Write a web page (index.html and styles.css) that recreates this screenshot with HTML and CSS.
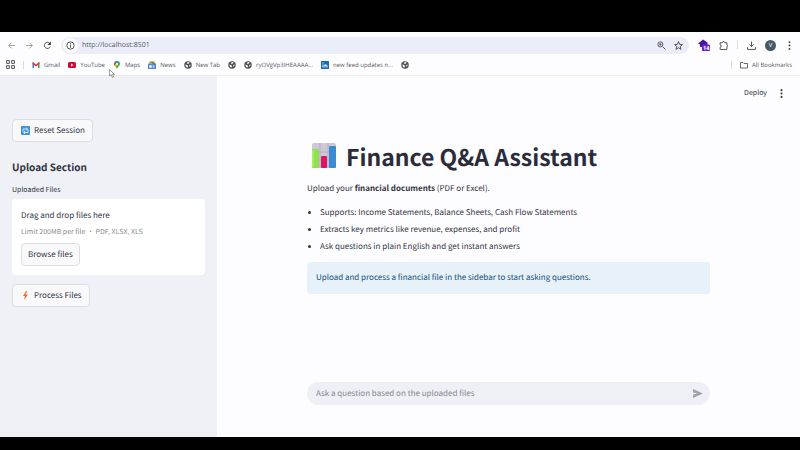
FILE: index.html
```html
<!DOCTYPE html>
<html lang="en">
<head>
<meta charset="utf-8">
<title>Finance Q&amp;A Assistant</title>
<link rel="stylesheet" href="styles.css">
</head>
<body>
<svg class="defs" aria-hidden="true">
  <symbol id="globe" viewBox="0 0 16 16"><circle cx="8" cy="8" r="7.5" fill="#4d5156"/><path d="M3 7l3 1 2 2-1 3C4 13 3 10 3 7zM8 2l3 1-1 2-3 1-1-2zM11 8l2-1c0 3-1 4-2 4l-1-1z" fill="#fff"/></symbol>
</svg>
<header class="browser">
  <div class="toolbar">
    <button class="tool" aria-label="Back"><svg viewBox="0 0 16 16"><path d="M14 8H3M8 3L3 8l5 5" class="line pale"/></svg></button>
    <button class="tool" aria-label="Forward"><svg viewBox="0 0 16 16"><path d="M2 8h11M8 3l5 5-5 5" class="line pale"/></svg></button>
    <button class="tool" aria-label="Reload"><svg viewBox="0 0 16 16"><path d="M13 10a5.500 5.500 0 1 1-1-6l1 1" class="line"/><path d="M14 1v6H8z" fill="#333"/></svg></button>
    <div class="address">
      <span class="info"><svg viewBox="0 0 16 16"><circle cx="8" cy="8" r="6.500" class="line"/><path d="M8 7v5M8 4v2" class="line"/></svg></span>
      <input type="text" aria-label="Address" value="http://localhost:8501">
      <button class="tool" aria-label="Zoom"><svg viewBox="0 0 16 16"><circle cx="6" cy="6" r="4.500" class="line"/><path d="M10 10l5 5M4 6h4M6 4v4" class="line"/></svg></button>
      <button class="tool" aria-label="Bookmark this page"><svg viewBox="0 0 16 16"><path d="M8 1l2 5 5 .4-4 3.400 1.300 5L8 12l-4.300 2.800 1.300-5-4-3.400L6 6z" class="line"/></svg></button>
    </div>
    <div class="extensions">
      <button class="ext" aria-label="Extension, 14"><svg viewBox="0 0 24 24"><path d="M10 1l9 6v9H4v-5L0 9l4-3z" fill="#4a12a8"/><rect x="8" y="11" width="16" height="13" rx="2" fill="#6325c4"/><text x="10" y="22" class="count">14</text></svg></button>
      <button class="tool" aria-label="Extensions"><svg viewBox="0 0 16 16"><path d="M2 3h4c0-3 4-3 4 0h4v4c2 0 2 3 0 3v5H2v-4c3 0 3-4 0-4z" class="line"/></svg></button>
      <span class="rule"></span>
      <button class="tool" aria-label="Downloads"><svg viewBox="0 0 16 16"><path d="M8 1v9M4 6l4 4 4-4M1 11v4h14v-4" class="line"/></svg></button>
      <button class="avatar" aria-label="Profile">V</button>
      <button class="tool" aria-label="Browser menu"><svg viewBox="0 0 16 16" fill="#333"><circle cx="8" cy="2" r="1.600"/><circle cx="8" cy="8" r="1.600"/><circle cx="8" cy="14" r="1.600"/></svg></button>
    </div>
  </div>
  <nav class="bookmarks" aria-label="Bookmarks">
    <button class="tool" aria-label="Apps"><svg viewBox="0 0 16 16"><path d="M1 1h5v5H1zM10 1h5v5h-5zM1 10h5v5H1zM10 10h5v5h-5z" class="line"/></svg></button>
    <span class="rule"></span>
    <a href="#"><svg viewBox="0 0 16 16"><path d="M1 3h3v11H1z" fill="#4c79c9"/><path d="M12 3h3v11h-3z" fill="#39a55a"/><path d="M1 3h2l5 4 5-4h2v3l-7 5-7-5z" fill="#dd3b35"/></svg>Gmail</a>
    <a href="#"><svg viewBox="0 0 16 16"><rect y="2" width="16" height="12" rx="3" fill="#e00030"/><path d="M6 5l5 3-5 3z" fill="#fff"/></svg>YouTube</a>
    <a href="#"><svg viewBox="0 0 16 16"><path d="M8 0a6 6 0 0 1 6 6c0 4-5 5-6 10C7 11 2 10 2 6a6 6 0 0 1 6-6z" fill="#36a853"/><path d="M8 0a6 6 0 0 0-5 3l4 3 4-5z" fill="#4285f4"/><path d="M3 3L2 6l1 3 4-4z" fill="#e44435"/><path d="M3 9l3 3 5-6-3-2z" fill="#f8bb15"/><circle cx="8" cy="6" r="2" fill="#fff"/></svg>Maps</a>
    <a href="#"><svg viewBox="0 0 16 16"><path d="M3 1h10v7H3z" fill="#41a35a"/><path d="M0 5l8-2v5H0z" fill="#e7a52b"/><path d="M10 4l6 1v4h-6z" fill="#d84b43"/><rect y="6" width="16" height="10" rx="1" fill="#4b85d8"/><path d="M3 9h4v4H3zM9 9h4M9 11h4M9 13h4" fill="#fff" stroke="#fff"/></svg>News</a>
    <a href="#"><svg><use href="#globe"/></svg>New Tab</a>
    <a href="#" aria-label="Saved page"><svg><use href="#globe"/></svg></a>
    <a href="#"><svg><use href="#globe"/></svg>ryOVgVp3IHEAAAA...</a>
    <a href="#"><svg viewBox="0 0 16 16"><rect width="16" height="16" rx="1" fill="#1769b5"/><path d="M4 7v6M8 13V7M8 10c0-3 4-3 4 0v3M4 3v2" fill="none" stroke="#fff" stroke-width="2"/></svg>new feed updates n...</a>
    <a href="#" aria-label="Saved page"><svg><use href="#globe"/></svg></a>
    <span class="rule last"></span>
    <a href="#"><svg viewBox="0 0 16 16"><path d="M1 3h5l2 2h7v9H1z" class="line"/></svg>All Bookmarks</a>
  </nav>
  <svg class="pointer" viewBox="0 0 12 18" aria-hidden="true"><path d="M1 1v13l3-3 3 6 2-1-2-5h4z" fill="#fff" stroke="#444"/></svg>
</header>
<div class="app">
  <aside class="sidebar">
    <button class="btn"><svg viewBox="0 0 18 18"><rect width="18" height="18" rx="2" fill="#3c92df"/><path d="M4 11V6h8M10 3l3 3-3 3M14 7v6H6M8 10l-3 3 3 3" fill="none" stroke="#fff" stroke-width="1.500"/></svg>Reset Session</button>
    <h2>Upload Section</h2>
    <p class="label" id="files">Uploaded Files</p>
    <section class="drop" aria-labelledby="files">
      <p>Drag and drop files here</p>
      <small>Limit 200MB per file • PDF, XLSX, XLS</small>
      <button class="btn">Browse files</button>
    </section>
    <button class="btn"><svg viewBox="0 0 18 18"><path d="M10 0L4 10h4L6 18l8-11h-4l2-7z" fill="#ed6a32"/><path d="M10 1L6 8l4-1z" fill="#f6a34a"/></svg>Process Files</button>
  </aside>
  <main>
    <div class="actions"><button>Deploy</button><button aria-label="Main menu"><svg viewBox="0 0 16 16" fill="#31333f"><circle cx="8" cy="2" r="1.800"/><circle cx="8" cy="8" r="1.800"/><circle cx="8" cy="14" r="1.800"/></svg></button></div>
    <div class="content">
      <h1><svg viewBox="0 0 26 26" aria-hidden="true"><rect x="1" width="24" height="25" rx="2" fill="#cfc8d6"/><path d="M1 9h24M1 17h24M9 0v25M17 0v25" stroke="#b6afc0"/><rect x="1" y="6" width="7" height="19" rx="1" fill="#8fe052"/><rect x="10" y="13" width="6" height="12" rx="1" fill="#dc1663"/><rect x="18" y="3" width="7" height="22" rx="1" fill="#398bd5"/><path d="M2 7v17" stroke="#c2f27c"/></svg>Finance Q&amp;A Assistant</h1>
      <p>Upload your <strong>financial documents</strong> (PDF or Excel).</p>
      <ul>
        <li>Supports: Income Statements, Balance Sheets, Cash Flow Statements</li>
        <li>Extracts key metrics like revenue, expenses, and profit</li>
        <li>Ask questions in plain English and get instant answers</li>
      </ul>
      <div class="notice">Upload and process a financial file in the sidebar to start asking questions.</div>
    </div>
    <form class="chat">
      <input type="text" aria-label="Question" placeholder="Ask a question based on the uploaded files">
      <button type="button" aria-label="Send"><svg viewBox="0 0 12 10"><path d="M1 0l11 5-11 5V6l5-1-5-1z" fill="#a0a3af"/></svg></button>
    </form>
  </main>
</div>
</body>
</html>
```
FILE: styles.css
```css
* { box-sizing: border-box; }
body {
  margin: 0;
  min-height: 100vh;
  display: flex;
  flex-direction: column;
  border-top: 32px solid #000;
  border-bottom: 13px solid #000;
  background: #fdfdff;
  color: #31333f;
  font: 8px/16px "Noto Sans CJK SC", "Open Sans", sans-serif;
  text-rendering: geometricPrecision;
}
button, input { font: inherit; color: inherit; text-rendering: inherit; border: 0; background: none; padding: 0; margin: 0; }
p, h1, h2, ul { margin: 0; }
svg { display: block; flex: none; }
.defs { position: absolute; width: 0; height: 0; }
.line { fill: none; stroke: #444; stroke-width: 1.6; }
.pale { stroke: #999; }

.browser { position: relative; font-family: "Open Sans", sans-serif; border-bottom: 1px solid #ebecef; }
.toolbar { display: flex; align-items: center; height: 26px; padding: 0 6px 0 7px; gap: 9px; }
.tool svg { width: 9px; height: 9px; }
.address {
  flex: 1;
  display: flex;
  align-items: center;
  gap: 8px;
  height: 17px;
  padding: 0 6px 0 2px;
  border-radius: 9px;
  background: #ebeef8;
}
.info { margin-right: -4px; padding: 3px; border-radius: 50%; background: #fdfdff; }
.info svg { width: 9px; height: 9px; }
.address input { flex: 1; min-width: 0; padding-top: 2px; font-size: 7px; }
.address input, .bookmarks { color: #55585e; }
.extensions { display: flex; align-items: center; gap: 9px; }
.ext svg { width: 12px; height: 12px; }
.count { font: bold 11px "Open Sans", sans-serif; fill: #fff; }
.rule { width: 1px; height: 8px; background: #d5daeb; }
.avatar { width: 11px; height: 11px; border-radius: 50%; background: #455a64; color: #fff; font-size: 6px; line-height: 11px; }
.bookmarks { display: flex; align-items: center; gap: 8px; height: 17px; padding: 0 8px 4px 6px; font-size: 6px; }
.bookmarks a { display: flex; align-items: center; gap: 4px; color: inherit; text-decoration: none; white-space: nowrap; }
.bookmarks a svg { width: 8px; height: 8px; }
.last { margin-left: auto; }
.pointer { position: absolute; left: 109px; top: 37px; width: 6px; height: 9px; }

.app { flex: 1; display: flex; }
.sidebar { flex: 0 0 217px; padding: 43px 12px 0; background: #eff1f6; }
.btn {
  display: flex;
  align-items: center;
  gap: 4px;
  height: 23px;
  padding: 0 7px 0 8px;
  border: 1px solid #dddee4;
  border-radius: 4px;
  background: #f9f9fb;
}
.btn svg { width: 9px; height: 9px; }
h2 { margin-top: 16px; font-size: 10px; line-height: 18px; font-weight: bold; }
.label { margin-top: 7px; font-size: 7px; line-height: 14px; }
.drop { margin: 2px 0 9px; padding: 9px; border-radius: 4px; background: #fff; }
.drop small { display: block; margin-bottom: 3px; color: #8a8b92; font-size: 7px; }
.drop .btn { padding: 0 6px; }

main { flex: 1; display: flex; flex-direction: column; padding-bottom: 32px; }
.actions { display: flex; justify-content: flex-end; align-items: center; gap: 10px; padding: 9px 14px 0 0; }
.actions button { font-size: 7px; }
.actions svg { width: 9px; height: 9px; }
.content { padding: 36px 90px 0; }
h1 { display: flex; align-items: center; gap: 9px; padding-left: 4px; font-size: 23px; line-height: 38px; white-space: nowrap; color: #2b2c3b; }
h1 svg { width: 26px; height: 26px; }
.content p { margin-top: 6px; }
ul { margin: 7px 0; padding-left: 13px; line-height: 17px; }
.notice { padding: 8px 9px; border-radius: 4px; background: #e6f1fa; color: #174c72; }
.chat { display: flex; align-items: center; height: 23px; margin: auto 90px 0; padding: 0 7px 0 9px; border-radius: 12px; background: #eff0f5; }
.chat input { flex: 1; min-width: 0; outline: none; }
.chat input::placeholder { color: #85868e; opacity: 1; }
.chat svg { width: 11px; height: 9px; }
```
